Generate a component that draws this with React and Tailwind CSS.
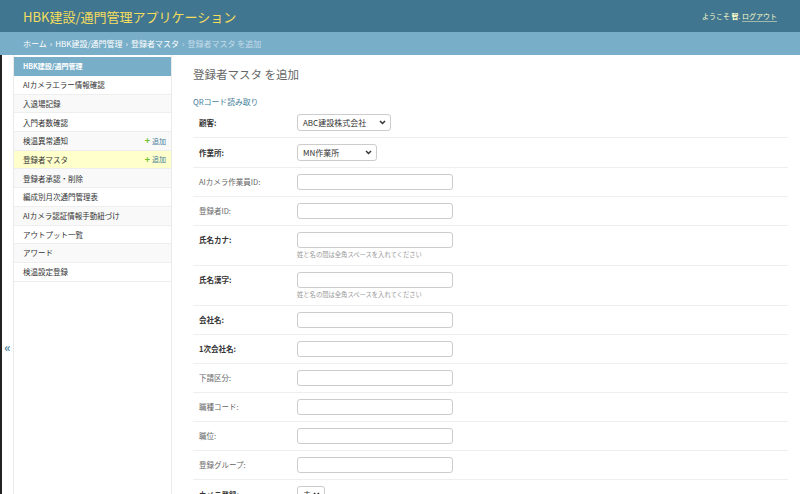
import React from 'react';

const navItems = [
  { label: 'AIカメラエラー情報確認' },
  { label: '入退場記録' },
  { label: '入門者数確認' },
  { label: '検温異常通知', add: true },
  { label: '登録者マスタ', add: true, current: true },
  { label: '登録者承認・削除' },
  { label: '編成別月次通門管理表' },
  { label: 'AIカメラ認証情報手動紐づけ' },
  { label: 'アウトプット一覧' },
  { label: 'アワード' },
  { label: '検温設定登録' },
];

// フォームの各行
const fields = [
  { label: '顧客', required: true, type: 'select', value: 'ABC建設株式会社', w: 'w-[94px]' },
  { label: '作業所', required: true, type: 'select', value: 'MN作業所', w: 'w-[80px]' },
  { label: 'AIカメラ作業員ID' },
  { label: '登録者ID' },
  { label: '氏名カナ', required: true, help: '姓と名の間は全角スペースを入れてください' },
  { label: '氏名漢字', required: true, help: '姓と名の間は全角スペースを入れてください' },
  { label: '会社名', required: true },
  { label: '1次会社名', required: true },
  { label: '下請区分' },
  { label: '職種コード' },
  { label: '職位' },
  { label: '登録グループ' },
  { label: 'カメラ登録', required: true, type: 'select', value: '未', w: 'w-[28px]' },
];

const Chevron = () => (
  <svg width="7" height="5" viewBox="0 0 7 5" className="shrink-0">
    <polyline points="1,1 3.5,3.5 6,1" fill="none" stroke="#333" strokeWidth="1.5" />
  </svg>
);

const FormRow = ({ field }) => (
  <div className="flex items-start border-b border-[#eee] pl-[6px] pt-[6px] pb-[6px]">
    <div
      className={`w-[98px] shrink-0 flex items-center ${field.type === 'select' ? 'h-[17px]' : 'h-[16px]'} text-[7.5px] ${
        field.required ? 'font-bold text-[#333]' : 'text-[#666]'
      }`}
    >
      {field.label}:
    </div>
    <div className="flex flex-col">
      {field.type === 'select' ? (
        <div
          className={`${field.w} h-[17px] flex items-center justify-between pl-[5px] pr-[4px] border border-[#ccc] rounded-[3px] bg-white text-[8px] text-[#333]`}
        >
          <span>{field.value}</span>
          <Chevron />
        </div>
      ) : (
        <div className="w-[156px] h-[16px] border border-[#ccc] rounded-[3px] bg-white" />
      )}
      {field.help && (
        <div className="mt-[3px] h-[8px] leading-[8px] text-[6.3px] text-[#999]">{field.help}</div>
      )}
    </div>
  </div>
);

export default function App() {
  return (
    <div className="w-[800px] h-[494px] overflow-hidden bg-white font-['Noto_Sans_CJK_JP',sans-serif]">
      {/* ヘッダー */}
      <div className="h-[32px] bg-[#417690] flex items-center justify-between pl-[23px] pr-[23px]">
        <div className="text-[13px] text-[#f5dd5d] leading-none">HBK建設/通門管理アプリケーション</div>
        <div className="text-[7px] text-[#ffc]">
          ようこそ <strong className="font-bold">智</strong>.{' '}
          <span className="border-b border-[#ffc]/50">ログアウト</span>
        </div>
      </div>

      {/* パンくず */}
      <div className="h-[23px] bg-[#79aec8] flex items-center pl-[23px] text-[8px] text-white">
        <span>ホーム</span>
        <span className="mx-[3px]">›</span>
        <span>HBK建設/通門管理</span>
        <span className="mx-[3px]">›</span>
        <span>登録者マスタ</span>
        <span className="mx-[3px] text-[#c4dce8]">›</span>
        <span className="text-[#c4dce8]">登録者マスタ を追加</span>
      </div>

      <div className="flex">
        {/* サイドバー開閉ボタン */}
        <div className="w-[14px] shrink-0 border-l-2 border-l-[#222] border-r border-r-[#eaeaea] flex justify-center">
          <span className="mt-[286px] text-[12px] font-bold leading-none text-[#447e9b]">«</span>
        </div>

        {/* サイドバー */}
        <div className="w-[158px] shrink-0 border-r border-[#eaeaea] pt-[2px]">
          <div className="h-[19px] bg-[#79aec8] flex items-center pl-[9px] text-[7px] font-bold text-white">
            HBK建設/通門管理
          </div>
          {navItems.map((item, i) => (
            <div
              key={item.label}
              className={`h-[18.7px] flex items-center justify-between pl-[9px] pr-[5px] border-b border-[#eee] text-[7.5px] ${
                item.current ? 'bg-[#ffc] text-[#333]' : i % 2 === 1 ? 'bg-[#f9f9f9] text-[#333]' : 'bg-white text-[#333]'
              }`}
            >
              <span>{item.label}</span>
              {item.add && (
                <span className="flex items-center gap-[2px] text-[7px] text-[#447e9b]">
                  <span className="text-[#70bf2b] font-bold text-[9px] leading-none">+</span>
                  追加
                </span>
              )}
            </div>
          ))}
        </div>

        {/* メインコンテンツ */}
        <div className="flex-1 pl-[21px] pr-[12px] pt-[12px]">
          <h1 className="text-[11.5px] leading-[15px] text-[#666]">登録者マスタ を追加</h1>
          <div className="mt-[14px] text-[7.8px] leading-[11px] text-[#447e9b]">QRコード読み取り</div>
          <div className="mt-[1px]">
            {fields.map((f) => (
              <FormRow key={f.label} field={f} />
            ))}
          </div>
        </div>
      </div>
    </div>
  );
}
